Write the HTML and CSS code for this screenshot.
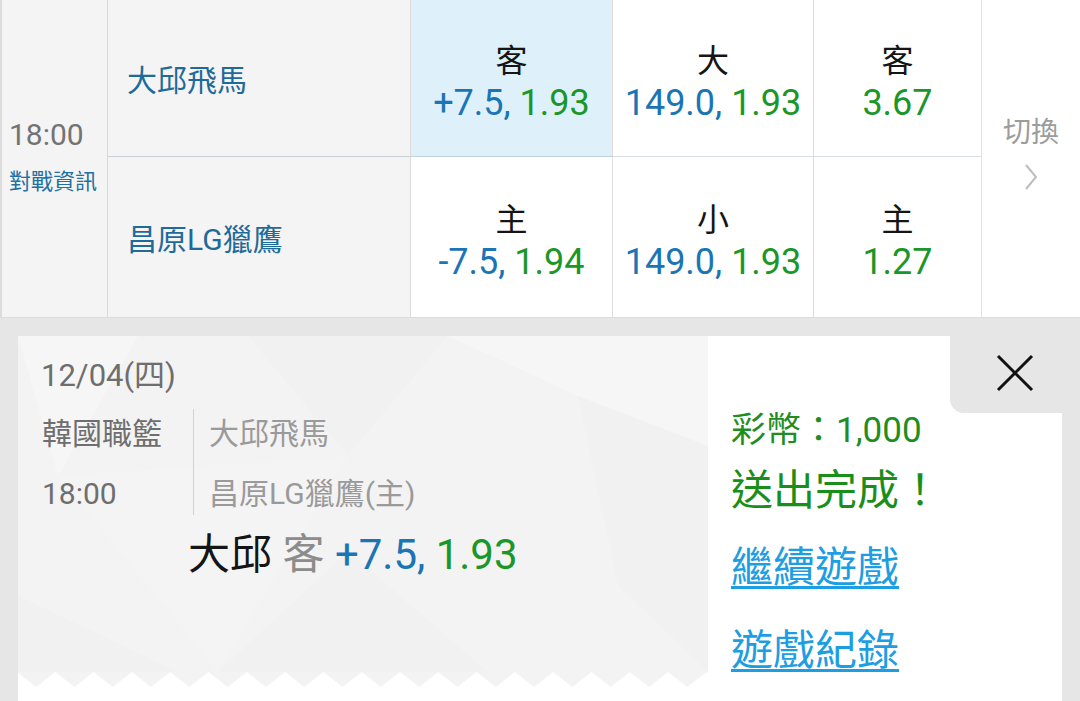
FILE: index.html
```html
<!DOCTYPE html>
<html lang="zh-Hant">
<head>
<meta charset="utf-8">
<title>投注</title>
<link rel="stylesheet" href="styles.css">
</head>
<body>
<div class="page">
  <div class="board">
    <div class="time-cell">
      <div class="time">18:00</div>
      <div class="info">對戰資訊</div>
    </div>
    <div class="team row1">大邱飛馬</div>
    <div class="odd row1 sel">
      <div class="lab">客</div>
      <div class="val"><span class="b">+7.5,</span> <span class="g">1.93</span></div>
    </div>
    <div class="odd row1">
      <div class="lab">大</div>
      <div class="val"><span class="b">149.0,</span> <span class="g">1.93</span></div>
    </div>
    <div class="odd row1 last">
      <div class="lab">客</div>
      <div class="val"><span class="g">3.67</span></div>
    </div>
    <div class="switch">
      <div class="switch-text">切換</div>
      <svg class="chev" width="18" height="28" viewBox="0 0 18 28"><path d="M4 2 L14 14 L4 26" fill="none" stroke="#bdbdbd" stroke-width="2"/></svg>
    </div>
    <div class="team row2">昌原LG獵鷹</div>
    <div class="odd row2">
      <div class="lab">主</div>
      <div class="val"><span class="b">-7.5,</span> <span class="g">1.94</span></div>
    </div>
    <div class="odd row2">
      <div class="lab">小</div>
      <div class="val"><span class="b">149.0,</span> <span class="g">1.93</span></div>
    </div>
    <div class="odd row2 last">
      <div class="lab">主</div>
      <div class="val"><span class="g">1.27</span></div>
    </div>
  </div>

  <div class="lower">
    <div class="card">
      <div class="left">
        <div class="left-body">
          <svg class="pattern" width="690" height="336" viewBox="0 0 690 336" preserveAspectRatio="none">
            <polygon points="0,0 120,0 40,140" fill="#ffffff" opacity="0.25"/>
            <polygon points="230,0 430,0 330,120" fill="#ededed" opacity="0.2"/>
            <polygon points="430,0 690,0 690,110 560,60" fill="#ffffff" opacity="0.25"/>
            <polygon points="0,260 160,336 0,336" fill="#ededed" opacity="0.25"/>
            <polygon points="200,336 330,215 470,336" fill="#ededed" opacity="0.2"/>
            <polygon points="560,60 690,110 690,336 600,250" fill="#efefef" opacity="0.3"/>
            <polygon points="40,140 330,120 200,336" fill="#f7f7f7" opacity="0.35"/>
          </svg>
          <div class="date">12/04(四)</div>
          <div class="match">
            <div class="league">
              <div class="ln">韓國職籃</div>
              <div class="ln">18:00</div>
            </div>
            <div class="sep"></div>
            <div class="teams">
              <div class="ln">大邱飛馬</div>
              <div class="ln">昌原LG獵鷹(主)</div>
            </div>
          </div>
          <div class="bet"><span class="k">大邱</span> <span class="side">客</span> <span class="b">+7.5,</span> <span class="g">1.93</span></div>
        </div>
        <svg class="zigzag" width="690" height="15" viewBox="0 0 690 15">
          <defs>
            <pattern id="zz" x="-1" y="0" width="38.3" height="15" patternUnits="userSpaceOnUse">
              <path d="M0 0 H38.3 L19.15 15 Z" fill="#f3f3f3"/>
            </pattern>
          </defs>
          <rect width="690" height="15" fill="url(#zz)"/>
        </svg>
      </div>
      <div class="right">
        <div class="close">
          <svg width="38" height="38" viewBox="0 0 38 38"><path d="M2 2 L36 36 M36 2 L2 36" stroke="#111" stroke-width="3" fill="none"/></svg>
        </div>
        <div class="coin">彩幣：1,000</div>
        <div class="done">送出完成！</div>
        <a class="link first" href="#">繼續遊戲</a>
        <a class="link second" href="#">遊戲紀錄</a>
      </div>
    </div>
  </div>
</div>
</body>
</html>
```
FILE: styles.css
```css
* { box-sizing: border-box; }
html, body {
  margin: 0;
  padding: 0;
  width: 1080px;
  height: 701px;
  overflow: hidden;
  background: #e6e6e6;
  font-family: Roboto, "Noto Sans CJK TC", sans-serif;
}
.page { width: 1080px; height: 701px; overflow: hidden; }

/* top board */
.board {
  display: grid;
  grid-template-columns: 108px 303px 202px 201px 168px 1fr;
  grid-template-rows: 157px 161px;
  background: #fff;
}
.time-cell {
  grid-row: 1 / 3;
  grid-column: 1;
  background: #f4f4f4;
  border-left: 2px solid #dcdcdc;
  border-right: 1px solid #d9d9d9;
  border-bottom: 1px solid #dcdcdc;
  display: flex;
  flex-direction: column;
  justify-content: center;
  padding-left: 7px;
  padding-bottom: 4px;
}
.time {
  font-size: 30px;
  line-height: 34px;
  color: #737373;
}
.info {
  font-size: 22px;
  line-height: 28px;
  margin-top: 16px;
  color: #2270a3;
}
.team {
  grid-column: 2;
  background: #f4f4f4;
  display: flex;
  align-items: center;
  padding-left: 19px;
  font-size: 30px;
  color: #1e6a99;
  border-right: 1px solid #dadada;
}
.team.row1 { grid-row: 1; border-bottom: 1px solid #c9d2d7; }
.team.row2 { grid-row: 2; border-bottom: 1px solid #dcdcdc; }
.odd {
  display: flex;
  flex-direction: column;
  align-items: center;
  justify-content: center;
  border-right: 1px solid #dddddd;
  padding-top: 9px;
}
.odd.row1 { grid-row: 1; border-bottom: 1px solid #d7dde0; }
.odd.row2 { grid-row: 2; border-bottom: 1px solid #dcdcdc; }
.odd.last { border-right: 1px solid #e2e2e2; }
.odd.sel { background: #def1fb; border-bottom-color: #bcd3de; }
.lab {
  font-size: 32px;
  line-height: 40px;
  color: #151515;
}
.val {
  font-size: 36px;
  line-height: 44px;
  white-space: nowrap;
}
.b { color: #1b75b5; }
.g { color: #1b9629; }

.switch {
  grid-row: 1 / 3;
  grid-column: 6;
  display: flex;
  flex-direction: column;
  align-items: center;
  justify-content: center;
  padding-bottom: 10px;
  border-bottom: 1px solid #dcdcdc;
}
.switch-text {
  font-size: 28px;
  line-height: 32px;
  color: #9c9c9c;
}
.chev { margin-top: 14px; display: block; }

/* lower */
.lower {
  background: #e6e6e6;
  padding: 18px 18px 0 18px;
  height: 383px;
}
.card {
  display: flex;
  width: 1044px;
  height: 420px;
  background: #fff;
}
.left { width: 690px; display: flex; flex-direction: column; }
.left-body {
  position: relative;
  height: 336px;
  background: #f3f3f3;
  padding: 20px 0 0 23px;
  color: #6e6e6e;
}
.pattern { position: absolute; left: 0; top: 0; }
.date, .match, .bet { position: relative; }
.zigzag { display: block; }
.date {
  font-size: 31px;
  line-height: 40px;
}
.match {
  display: flex;
  margin-top: 8px;
}
.ln {
  font-size: 30px;
  line-height: 60px;
  white-space: nowrap;
}
.league { width: 152px; color: #6e6e6e; padding-left: 1px; }
.sep {
  width: 1px;
  height: 106px;
  margin-top: 5px;
  background: #d2d2d2;
}
.teams { padding-left: 15px; color: #9a9a9a; }
.bet {
  margin-top: 6px;
  padding-left: 147px;
  font-size: 42px;
  line-height: 50px;
  white-space: nowrap;
}
.bet .k { color: #151515; }
.bet .side { color: #8c8c8c; }

.right {
  flex: 1;
  position: relative;
  padding: 75px 0 0 23px;
  display: flex;
  flex-direction: column;
  align-items: flex-start;
}
.close {
  position: absolute;
  top: 0;
  right: 0;
  width: 112px;
  height: 77px;
  background: #e6e6e6;
  border-bottom-left-radius: 14px;
  display: flex;
  align-items: center;
  justify-content: center;
  padding-left: 17px;
  padding-bottom: 4px;
}
.close svg { display: block; }
.coin {
  font-size: 35px;
  line-height: 40px;
  color: #1f8d1f;
}
.done {
  font-size: 42px;
  line-height: 52px;
  margin-top: 14px;
  color: #198f19;
}
.link {
  font-size: 42px;
  line-height: 52px;
  color: #1d9de2;
  text-decoration: underline;
  text-decoration-thickness: 3px;
  text-underline-offset: 4px;
}
.link.first { margin-top: 25px; }
.link.second { margin-top: 31px; }
```
